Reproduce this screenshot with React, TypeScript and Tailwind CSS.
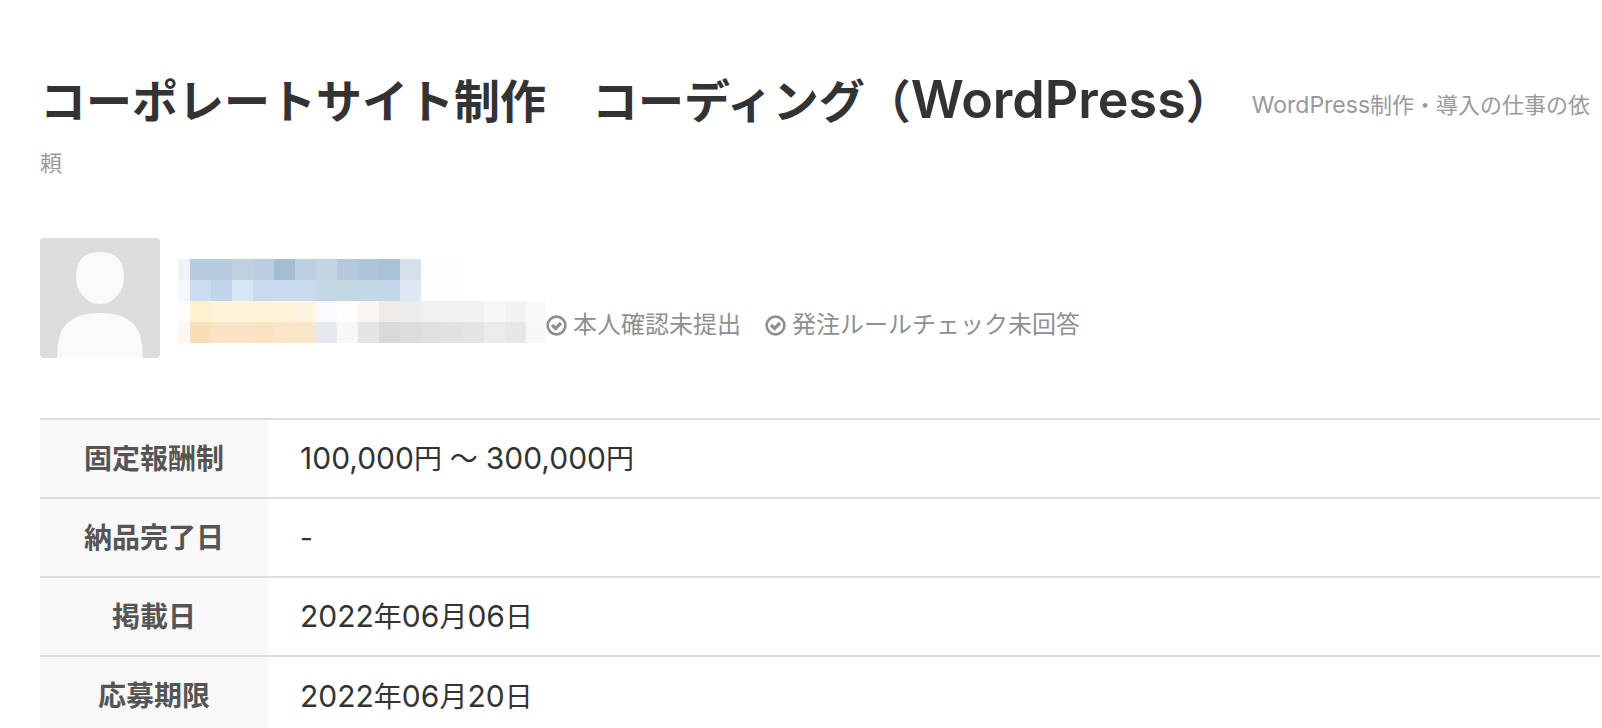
const mosaic = [
  "#edf3f8 #b6cbdd #b5cbde #bfd1e0 #bbcee0 #a4bcd4 #bccfe0 #c3d5e3 #b5c9dc #adc4da #aac2d8 #d5e0ec #fefefe #fefefe #ffffff #ffffff #ffffff #ffffff",
  "#f3f7fc #cbdcf1 #c1d5ea #d7e6f4 #c8daec #c8daec #c8daeb #c3d7e4 #c3d7e3 #c3d7e7 #c4d7e8 #dee9f4 #fefefe #fefefe #ffffff #ffffff #ffffff #ffffff",
  "#fffdf9 #fff1d0 #fff5db #fff5dc #fff4d8 #fff4dc #fff4e0 #fafaff #fffefc #fbf5f2 #efebe8 #eeecea #f0f0f0 #f0f0f0 #f1f1f1 #f7f7f7 #f2f2f2 #f9f9f9",
  "#fdf7f1 #f8dfb8 #f9e5c6 #f9e4c6 #f8e4c3 #f9e6c8 #f8e7cb #e6e9f0 #f7f7f7 #e4e4e4 #d9d9d9 #dcdcdc #e0e0e0 #e1e1e1 #e4e4e4 #ebebeb #e7e7e7 #f7f7f7",
].map((row) => row.split(" "));

const details = [
  { label: "固定報酬制", value: "100,000円 〜 300,000円" },
  { label: "納品完了日", value: "-" },
  { label: "掲載日", value: "2022年06月06日" },
  { label: "応募期限", value: "2022年06月20日" },
];

function Avatar() {
  return (
    <svg viewBox="0 0 120 120" className="size-30 shrink-0 rounded bg-[#dcdcdc]" role="img" aria-label="">
      <path
        d="M60 14C76 14 84 23 84 39C84 53 74 66 60 66C46 66 36 53 36 39C36 23 44 14 60 14Z"
        fill="#fafafa"
      />
      <path d="M17 120C18 99 20 91 29 84C37 77 48 75 60 75C72 75 83 77 91 84C100 91 102 99 103 120Z" fill="#fafafa" />
    </svg>
  );
}

function MaskedName() {
  return (
    <svg viewBox="0 0 368 84" className="h-21 w-[368px] shrink-0" shapeRendering="crispEdges" aria-hidden="true">
      {mosaic.map((row, y) =>
        row.map((fill, x) => (
          <rect
            key={`${x}-${y}`}
            x={x === 0 ? 0 : 12 + (x - 1) * 21}
            y={y * 21}
            width={x === 0 ? 12 : 21}
            height={21}
            fill={fill}
          />
        ))
      )}
    </svg>
  );
}

// Digits are set a little larger than the kanji around them.
function Value({ text }: { text: string }) {
  return (
    <>
      {text.split(/([\d,]+)/).map((part, i) =>
        i % 2 === 1 ? (
          <span key={i} className="text-[30px]">
            {part}
          </span>
        ) : (
          part
        )
      )}
    </>
  );
}

function Badge({ text }: { text: string }) {
  return (
    <li className="flex items-center gap-1.5">
      <svg viewBox="0 0 21 21" className="size-[21px]" fill="none" stroke="#8f8f8f" aria-hidden="true">
        <circle cx="10.5" cy="10.5" r="8.9" strokeWidth="2.6" />
        <path d="M6 10L9.6 13.4L15 8" strokeWidth="3.2" />
      </svg>
      <span>{text}</span>
    </li>
  );
}

export default function App() {
  return (
    <main className="bg-white pt-18 pr-0.5 pl-10 font-['Inter','Noto_Sans_CJK_JP',sans-serif] text-[#333]">
      <h1 className="text-[46px] leading-[58px] font-bold">
        コーポレートサイト制作　コーディング（
        <span className="text-[52px] leading-none font-semibold">WordPress</span>）
        <span className="ml-5 align-middle text-[22px] leading-none font-normal text-[#999]">
          <span className="text-[23px]">WordPress</span>制作・導入の仕事の依頼
        </span>
      </h1>

      <div className="mt-[50px] flex items-start gap-[18px]">
        <Avatar />
        <div className="flex items-end pt-[21px]">
          <MaskedName />
          <ul className="flex gap-6 text-2xl leading-9 text-[#8f8f8f]">
            <Badge text="本人確認未提出" />
            <Badge text="発注ルールチェック未回答" />
          </ul>
        </div>
      </div>

      <table className="mt-15 w-full border-collapse text-[28px] leading-9">
        <tbody>
          {details.map((item) => (
            <tr key={item.label} className="h-[79px] border-t-2 border-[#ddd]">
              <th scope="row" className="w-[228px] bg-[#f8f8f8] text-center font-bold text-[#555]">
                {item.label}
              </th>
              <td className="pl-8">
                <Value text={item.value} />
              </td>
            </tr>
          ))}
        </tbody>
      </table>
    </main>
  );
}
